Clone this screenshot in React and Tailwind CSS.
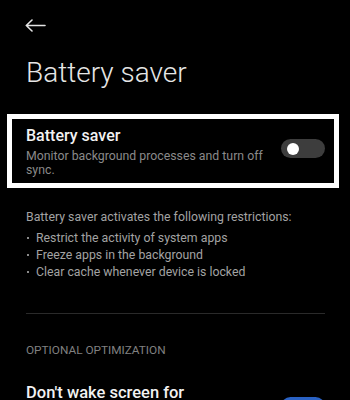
import React from "react";

export default function App() {
  return (
    <div className="w-[350px] h-[400px] bg-black overflow-hidden font-['Roboto','Liberation_Sans',sans-serif]">
      <div className="pt-[19px] pl-[25px]">
        <svg width="21" height="13" viewBox="0 0 21 13" fill="none">
          <path d="M7 1 L1.3 6.5 L7 12 M1.3 6.5 H20" stroke="#e4e4e4" strokeWidth="1.6" strokeLinecap="round" strokeLinejoin="round" />
        </svg>
      </div>
      <h1 className="mt-[24px] pl-[26px] text-[28px] leading-[34px] font-light text-[#e6e6e6]">Battery saver</h1>

      <div className="mt-[24px] ml-[7px] w-[332px] h-[74px] border-[5px] border-white bg-black flex items-start pt-[7px] pl-[14px] pr-[9px]">
        <div className="flex-1 min-w-0">
          <div className="text-[16px] leading-[20px] font-medium text-[#f2f2f2]">Battery saver</div>
          <div className="mt-[3px] w-[250px] text-[12.3px] leading-[14px] text-[#8a8a8a]">Monitor background processes and turn off sync.</div>
        </div>
        <div className="mt-[13px] w-[44px] h-[19px] rounded-full bg-[#3d3d3d] flex items-center pl-[6px]">
          <div className="w-[12px] h-[12px] rounded-full bg-white" />
        </div>
      </div>

      <div className="mt-[21px] pl-[26px] text-[12.3px] leading-[17px] text-[#a3a3a3]">
        Battery saver activates the following restrictions:
      </div>
      <ul className="mt-[4px] pl-[27px] text-[12.3px] leading-[17px] text-[#a3a3a3]">
        {[
          "Restrict the activity of system apps",
          "Freeze apps in the background",
          "Clear cache whenever device is locked",
        ].map((t) => (
          <li key={t} className="flex items-center">
            <span className="w-[2px] h-[2px] bg-[#8a8a8a] mr-[7px] mb-[2px]" />
            <span>{t}</span>
          </li>
        ))}
      </ul>

      <div className="mt-[32px] ml-[26px] w-[299px] h-px bg-[#2a2a2a]" />

      <div className="mt-[28px] pl-[26px] text-[11.8px] leading-[16px] text-[#808080]">OPTIONAL OPTIMIZATION</div>

      <div className="mt-[24px] pl-[26px] pr-[25px] flex items-start justify-between">
        <div className="text-[16.5px] leading-[22px] font-medium text-[#f2f2f2]">Don't wake screen for</div>
        <div className="mt-[15px] w-[44px] h-[19px] rounded-full bg-[#2a62c4]" />
      </div>
    </div>
  );
}
